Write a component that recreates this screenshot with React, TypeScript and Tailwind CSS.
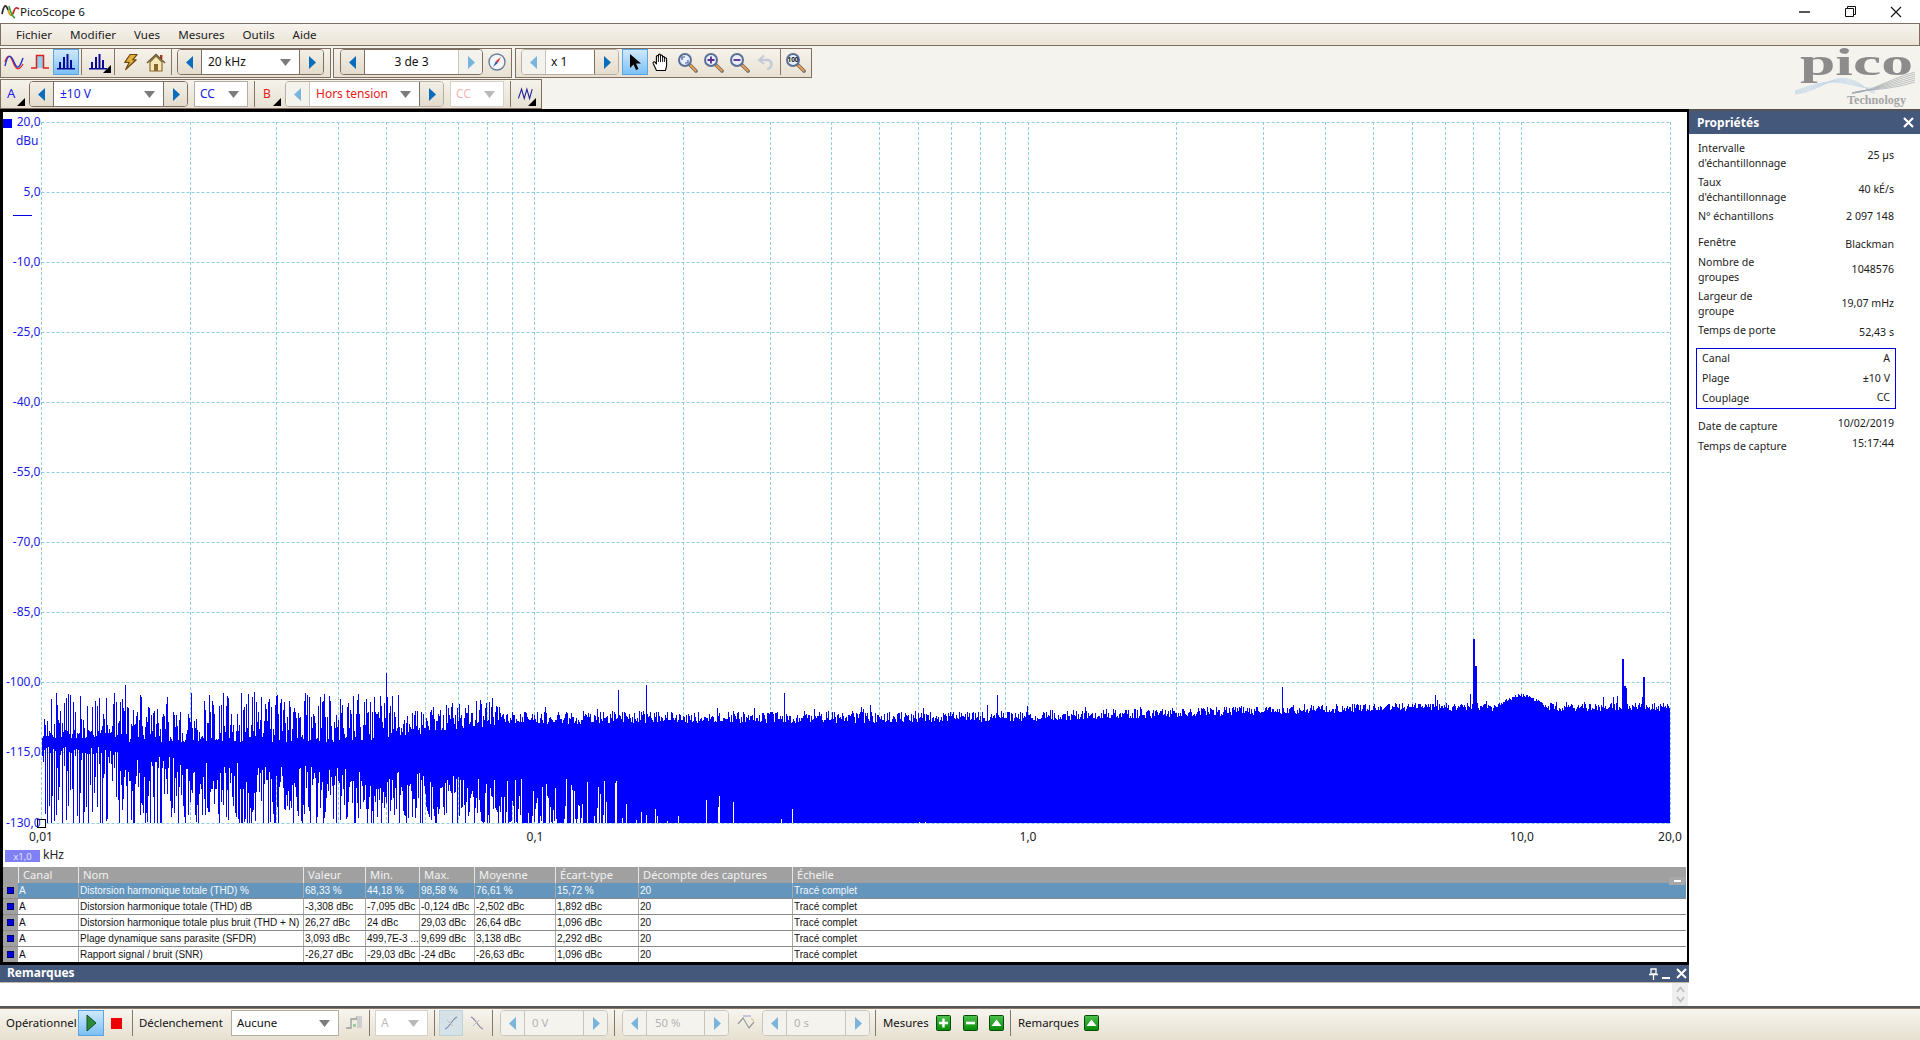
import { ReactNode } from 'react';

// seeded random so the trace stays the same on every load
const mulberry = (seed: number) => () => {
  seed = (seed + 0x6d2b79f5) | 0;
  let t = Math.imul(seed ^ (seed >>> 15), 1 | seed);
  t = (t + Math.imul(t ^ (t >>> 7), 61 | t)) ^ t;
  return ((t ^ (t >>> 14)) >>> 0) / 4294967296;
};

const lerp = (a: number, b: number, t: number) => a + (b - a) * Math.min(1, Math.max(0, t));

const buildTrace = () => {
  const rnd = mulberry(1234);
  const bottomEdge = 823;
  let d = '';
  for (let x = 42; x < 1670; x += x < 120 ? (rnd() < 0.55 ? 1 : 2) : 1) {
    // upper edge of the noise
    let top: number;
    if (x < 400) {
      top = 742 - Math.pow(rnd(), 1.25) * 50;
    } else if (x < 500) {
      top = lerp(736, 725, (x - 400) / 100) - Math.pow(rnd(), 1.5) * 28;
    } else {
      let base: number;
      if (x < 1000) base = lerp(725, 722, (x - 500) / 500);
      else if (x < 1400) base = lerp(722, 711, (x - 1000) / 400);
      else base = 711;
      top = base - rnd() * lerp(14, 8, (x - 500) / 900);
      if (rnd() < 0.05) top -= rnd() * 10;
      if (rnd() < 0.005) top -= 12 + rnd() * 14;
    }
    // hump around 10 kHz
    const hump = Math.max(0, 1 - Math.abs(x - 1521) / 26);
    if (hump > 0) top = 711 - Math.pow(hump, 0.6) * 14 - rnd() * 4;

    // lower edge: white slits coming up from the bottom
    let chance: number;
    let reach: number;
    if (x < 480) {
      chance = 0.96;
      reach = lerp(74, 46, (x - 42) / 438);
    } else if (x < 640) {
      chance = lerp(0.85, 0.15, (x - 480) / 160);
      reach = 44;
    } else if (x < 800) {
      chance = lerp(0.15, 0.03, (x - 640) / 160);
      reach = 28;
    } else if (x < 930) {
      chance = lerp(0.03, 0.004, (x - 800) / 130);
      reach = 18;
    } else {
      chance = 0.001;
      reach = 8;
    }
    let bottom = bottomEdge;
    if (rnd() < chance) {
      bottom = bottomEdge - Math.pow(rnd(), x < 480 ? 0.9 : 1.7) * reach;
      if (x < 480 && rnd() < 0.08) bottom = bottomEdge;
    }
    d += `M${x} ${top.toFixed(0)}V${bottom.toFixed(0)}`;
  }
  // keep the band solid at the very left, where the columns are spaced apart
  for (let x = 42; x < 120; x++) {
    const a = 738 - rnd() * 8;
    d += `M${x} ${a.toFixed(0)}V${(746 + rnd() * 8).toFixed(0)}`;
  }
  // the few peaks that stand out
  const peaks: [number, number][] = [
    [125, 685], [386, 673], [646, 685], [618, 690], [784, 693], [1473, 639], [1474, 639], [1475, 666],
    [1476, 666], [1470, 694], [1622, 659], [1623, 659], [1624, 686], [1625, 686], [1626, 688], [1643, 677],
    [1644, 677], [1617, 696], [1613, 697],
  ];
  peaks.forEach(([x, y]) => {
    d += `M${x} ${y}V720`;
  });
  return d;
};

const TRACE = buildTrace();

const px = (f: number) => 41.5 + 493.4 * Math.log10(f / 0.01);

const V_GRID: number[] = [];
[0.01, 0.1, 1, 10].forEach((dec) => {
  for (let m = 1; m < 10; m++) {
    if (dec * m <= 20) V_GRID.push(Math.floor(px(dec * m)) + 0.5);
  }
});
V_GRID.push(1670.5);

const Y_LABELS = ['20,0', '5,0', '-10,0', '-25,0', '-40,0', '-55,0', '-70,0', '-85,0', '-100,0', '-115,0', '-130,0'];

const Arrow = ({ dir, off }: { dir: 'l' | 'r'; off?: boolean }) => (
  <svg width="8" height="13" viewBox="0 0 8 13">
    <path d={dir === 'l' ? 'M7 0V13L0 6.5Z' : 'M1 0V13L8 6.5Z'} fill={off ? '#79b4dc' : '#0a6cbc'} />
  </svg>
);

const DropArrow = ({ off }: { off?: boolean }) => (
  <svg width="11" height="7" viewBox="0 0 11 7">
    <path d="M0 0H11L5.5 7Z" fill={off ? '#b9b9b9' : '#7c7c7c'} />
  </svg>
);

const Corner = () => (
  <svg width="8" height="8" viewBox="0 0 8 8">
    <path d="M8 0V8H0Z" fill="#000" />
  </svg>
);

const Sep = ({ className = '' }: { className?: string }) => <div className={`w-px h-[26px] bg-[#85766a] shrink-0 ${className}`} />;

const Slot = ({ className, children }: { className: string; children: ReactNode }) => (
  <div className={`h-[26px] shrink-0 flex items-center justify-center ${className}`}>{children}</div>
);

// spin box: arrow, text field, arrow
const Spinner = ({
  className,
  fieldClass,
  children,
  leftOff,
  rightOff,
  allOff,
}: {
  className: string;
  fieldClass: string;
  children: ReactNode;
  leftOff?: boolean;
  rightOff?: boolean;
  allOff?: boolean;
}) => (
  <div
    className={`h-[26px] shrink-0 flex rounded-[4px] border overflow-hidden ${
      allOff ? 'border-[#c9c5bc] bg-[#f5f3ee]' : leftOff ? 'border-[#b9aea2] bg-white' : 'border-[#7e6f62] bg-white'
    } ${className}`}
  >
    <div
      className={`w-[24px] shrink-0 flex items-center justify-center border-r ${
        allOff || leftOff
          ? 'bg-[#f4f2ed] border-[#c9c5bc]'
          : 'bg-gradient-to-b from-[#f3efe6] to-[#e4dccc] border-[#7e6f62]'
      }`}
    >
      <Arrow dir="l" off={allOff || leftOff} />
    </div>
    <div className={`flex-1 min-w-0 flex items-center ${fieldClass}`}>{children}</div>
    <div
      className={`w-[24px] shrink-0 flex items-center justify-center border-l ${
        allOff || rightOff
          ? 'bg-[#f4f2ed] border-[#c9c5bc]'
          : 'bg-gradient-to-b from-[#f3efe6] to-[#e4dccc] border-[#7e6f62]'
      }`}
    >
      <Arrow dir="r" off={allOff || rightOff} />
    </div>
  </div>
);

const Select = ({ className, label, textClass, off }: { className: string; label: string; textClass: string; off?: boolean }) => (
  <div
    className={`h-[26px] shrink-0 flex items-center justify-between pl-[5px] pr-[8px] border bg-white ${
      off ? 'border-[#d5d1c9]' : 'border-[#b5ada2]'
    } ${className}`}
  >
    <span className={textClass}>{label}</span>
    <DropArrow off={off} />
  </div>
);

const Lens = ({ children }: { children?: ReactNode }) => (
  <svg width="21" height="21" viewBox="0 0 21 21">
    <path d="M12.5 12.5L19 19" stroke="#6c6c6c" strokeWidth="3.6" strokeLinecap="round" />
    <path d="M13.5 13.5L18.6 18.6" stroke="#ee9f45" strokeWidth="2" strokeLinecap="round" />
    <circle cx="8" cy="8" r="6" fill="#e7f0fa" stroke="#5a6f96" strokeWidth="2" />
    {children}
  </svg>
);

const GreenBtn = ({ kind }: { kind: 'plus' | 'minus' | 'up' }) => (
  <svg width="15" height="16" viewBox="0 0 15 16">
    <defs>
      <linearGradient id="grn" x1="0" y1="0" x2="0" y2="1">
        <stop offset="0" stopColor="#4fc04f" />
        <stop offset="1" stopColor="#048a04" />
      </linearGradient>
    </defs>
    <rect x="0.5" y="0.5" width="14" height="15" rx="1" fill="url(#grn)" stroke="#064c06" />
    {kind === 'plus' && <path d="M3 8H12M7.5 3.5V12.5" stroke="#fff" strokeWidth="2.4" />}
    {kind === 'minus' && <path d="M3 8H12" stroke="#fff" strokeWidth="2.6" />}
    {kind === 'up' && <path d="M2.5 11H12.5L7.5 4.5Z" fill="#fff" />}
  </svg>
);

const ScopeIcon = () => (
  <svg width="20" height="16" viewBox="0 0 20 16" fill="none">
    <path d="M1 8C3 1 6 0 9 8S15 17 19 10" stroke="#e42a2a" strokeWidth="1.4" />
    <path d="M1 12C4 -2 7 1 10 8S15 16 19 4" stroke="#2733c8" strokeWidth="1.4" />
  </svg>
);

const SquareIcon = () => (
  <svg width="18" height="16" viewBox="0 0 18 16" fill="none">
    <rect x="6" y="2" width="7" height="12" fill="#8fd0ee" />
    <path d="M0 14H5.5V1.5H12.5V14H18" stroke="#e01f1f" strokeWidth="1.5" />
  </svg>
);

const BarsIcon = () => (
  <svg width="18" height="16" viewBox="0 0 18 16" fill="#0a0a9a">
    <rect x="0" y="14" width="18" height="1.5" />
    <rect x="2" y="8" width="2" height="6" />
    <rect x="6" y="3" width="2" height="11" />
    <rect x="9.5" y="0" width="2" height="14" />
    <rect x="13" y="6" width="2" height="8" />
  </svg>
);

const BoltIcon = () => (
  <svg width="15" height="18" viewBox="0 0 17 19">
    <path d="M8 1H16L11 7H15L3 18L7 10H2Z" fill="#e5b03c" stroke="#6d4a12" strokeWidth="1.4" strokeLinejoin="round" />
  </svg>
);

const HomeIcon = () => (
  <svg width="20" height="19" viewBox="0 0 20 19">
    <path d="M4 9V18H16V9L10 3Z" fill="#f6e9b8" stroke="#8a6a2a" strokeWidth="1.2" />
    <rect x="8" y="11" width="4" height="7" fill="#8a6a2a" />
    <path d="M1 10L10 1.5L19 10" fill="none" stroke="#6a5a3a" strokeWidth="1.6" />
    <rect x="14" y="2" width="2.4" height="4" fill="#9a3a22" />
  </svg>
);

const CompassIcon = () => (
  <svg width="18" height="18" viewBox="0 0 18 18">
    <circle cx="9" cy="9" r="8" fill="#f4f6fa" stroke="#6a7f9f" strokeWidth="1.4" />
    <path d="M13 4L9.8 10L8 8Z" fill="#e0352a" />
    <path d="M5 14L8 8L9.8 10Z" fill="#2a58b8" />
  </svg>
);

const AwIcon = () => (
  <svg width="16" height="14" viewBox="0 0 18 14" fill="none">
    <path d="M0.5 12L4 1.5L7 12L10 1.5L13 12L16 1.5" stroke="#1f1f9a" strokeWidth="1.2" />
  </svg>
);

const ToolBox = ({ className, children }: { className: string; children: ReactNode }) => (
  <div
    className={`h-[30px] shrink-0 flex items-center border border-[#7e6f62] bg-gradient-to-b from-[#f6f3ec] to-[#e8e1d2] ${className}`}
  >
    {children}
  </div>
);

const Toolbars = () => (
  <div className="flex flex-col gap-px pt-[2px]">
    <div className="flex">
      <ToolBox className="w-[331px] pb-[2px]">
        <Slot className="w-[26px]">
          <ScopeIcon />
        </Slot>
        <Slot className="w-[26px]">
          <SquareIcon />
        </Slot>
        <Slot className="w-[26px] border border-[#5aa7e8] bg-gradient-to-b from-[#cfe8fb] to-[#7cc0f5]">
          <BarsIcon />
        </Slot>
        <Sep className="ml-[2px]" />
        <Slot className="w-[32px]">
          <div className="relative">
            <BarsIcon />
            <div className="absolute right-[-4px] bottom-[-3px] flex">
              <Corner />
            </div>
          </div>
        </Slot>
        <Sep />
        <Slot className="w-[30px]">
          <BoltIcon />
        </Slot>
        <Slot className="w-[22px]">
          <HomeIcon />
        </Slot>
        <Sep className="ml-[4px]" />
        <Spinner className="ml-[5px] w-[147px]" fieldClass="pl-[6px] justify-between pr-[8px]">
          <span className="text-[12px] text-[#111]">20 kHz</span>
          <DropArrow />
        </Spinner>
      </ToolBox>
      <ToolBox className="ml-[2px] w-[179px] pb-[2px]">
        <Spinner className="ml-[6px] w-[143px]" fieldClass="justify-center" rightOff>
          <span className="text-[12px] text-[#111]">3 de 3</span>
        </Spinner>
        <Slot className="w-[28px]">
          <CompassIcon />
        </Slot>
      </ToolBox>
      <ToolBox className="ml-[3px] w-[297px] pb-[2px]">
        <Spinner className="ml-[5px] w-[98px]" fieldClass="pl-[5px]" leftOff>
          <span className="text-[12px] text-[#111]">x 1</span>
        </Spinner>
        <Slot className="ml-[3px] w-[26px] border border-[#5aa7e8] bg-gradient-to-b from-[#cfe8fb] to-[#7cc0f5]">
          <svg width="14" height="18" viewBox="0 0 14 18">
            <path d="M2 1V15L5.5 11.5L8 17L10.5 16L8 10.5H13Z" fill="#000" />
          </svg>
        </Slot>
        <Slot className="w-[26px]">
          <svg width="18" height="19" viewBox="0 0 18 19">
            <path
              d="M4.5 17.5L1.2 10.5C.6 9 2.3 8.2 3.2 9.4L4.4 11V3.6C4.4 2.2 6.4 2.2 6.4 3.6V2.2C6.4 .8 8.5 .8 8.5 2.2V3C8.5 1.7 10.6 1.7 10.6 3V4.4C10.6 3.2 12.6 3.2 12.6 4.6V5.5C12.6 4.4 14.6 4.4 14.6 5.7V12C14.6 14 14 15.5 13.4 17.5Z"
              fill="#fff"
              stroke="#000"
              strokeWidth="1.1"
              strokeLinejoin="round"
            />
            <path d="M6.4 3.6V9M8.5 3V9M10.6 4.4V9M12.6 5.5V9" stroke="#000" strokeWidth="0.9" />
          </svg>
        </Slot>
        <Slot className="w-[26px]">
          <Lens>
            <path d="M5 8V5H8M11 8V11H8" fill="none" stroke="#4a5f90" strokeWidth="1.2" />
          </Lens>
        </Slot>
        <Slot className="w-[26px]">
          <Lens>
            <path d="M4.5 8H11.5M8 4.5V11.5" stroke="#5a2a8a" strokeWidth="1.8" />
          </Lens>
        </Slot>
        <Slot className="w-[26px]">
          <Lens>
            <path d="M4.5 8H11.5" stroke="#5a2a8a" strokeWidth="1.8" />
          </Lens>
        </Slot>
        <Slot className="w-[26px]">
          <svg width="17" height="17" viewBox="0 0 17 17" fill="none">
            <path d="M7 1.5L2 6L7 10" stroke="#c4cbd8" strokeWidth="2" />
            <path d="M3 6H10C15 6 16.5 13 10 15.5" stroke="#c4cbd8" strokeWidth="2.4" />
          </svg>
        </Slot>
        <Sep className="ml-[2px]" />
        <Slot className="w-[29px]">
          <Lens>
            <text x="8" y="10" fontSize="6.5" fontWeight="700" textAnchor="middle" fill="#222">
              100
            </text>
          </Lens>
        </Slot>
      </ToolBox>
    </div>
    <ToolBox className="w-[542px]">
      <div className="w-[28px] h-[26px] shrink-0 relative flex items-center pl-[6px]">
        <span className="text-[13px] text-[#2222ee]">A</span>
        <div className="absolute left-[16px] bottom-[1px] flex">
          <Corner />
        </div>
      </div>
      <Spinner className="w-[159px]" fieldClass="pl-[6px] pr-[8px] justify-between">
        <span className="text-[12px] text-[#1a1ae0]">±10 V</span>
        <DropArrow />
      </Spinner>
      <Select className="ml-[6px] w-[54px]" label="CC" textClass="text-[12px] text-[#1a1ae0]" />
      <Sep className="ml-[6px]" />
      <div className="w-[30px] h-[26px] shrink-0 relative flex items-center pl-[8px]">
        <span className="text-[12px] text-[#e81a1a]">B</span>
        <div className="absolute left-[18px] bottom-[1px] flex">
          <Corner />
        </div>
      </div>
      <Spinner className="w-[159px]" fieldClass="pl-[6px] pr-[8px] justify-between" leftOff>
        <span className="text-[12px] text-[#e81a1a]">Hors tension</span>
        <DropArrow />
      </Spinner>
      <Select className="ml-[6px] w-[54px]" label="CC" textClass="text-[12px] text-[#f5b5b5]" off />
      <Sep className="ml-[6px]" />
      <div className="w-[30px] h-[26px] shrink-0 relative flex items-center pl-[7px]">
        <AwIcon />
        <div className="absolute left-[17px] bottom-[1px] flex">
          <Corner />
        </div>
      </div>
    </ToolBox>
  </div>
);

const PicoLogo = () => (
  <svg width="130" height="68" viewBox="0 -5 130 68" className="shrink-0 mt-[-5px]">
    {[0, 1, 2, 3, 4, 5].map((i) => (
      <g key={i} fill="none" strokeWidth="0.7">
        <path d={`M5 ${48 - i * 0.6}C30 ${46 - i * 2} 40 ${29 + i} 58 ${33 + i}S75 ${47 - i} 85 ${47 - i}`} stroke="#c3d7e8" />
        <path d={`M62 ${47 + 0}C78 ${47 - i} 92 ${36 + i * 2} 125 ${26 + i * 2}`} stroke="#a4a9ae" />
      </g>
    ))}
    <text
      x="10"
      y="29"
      fontFamily="Liberation Serif, serif"
      fontSize="38"
      fontWeight="700"
      fill="#8c8c8c"
      textLength="113"
      lengthAdjust="spacingAndGlyphs"
    >
      pico
    </text>
    <text x="57" y="58" fontFamily="Liberation Serif, serif" fontSize="11.5" fontWeight="700" fill="#a5a5a5" textLength="59" lengthAdjust="spacingAndGlyphs">
      Technology
    </text>
  </svg>
);

const Chart = () => (
  <svg width="1684" height="755" viewBox="3 112 1684 755" className="block shrink-0">
    <g stroke="#8fcfe0" strokeWidth="1" strokeDasharray="3 2">
      {Y_LABELS.map((_, i) => (
        <line key={i} x1="41.5" x2="1670" y1={Math.floor(122 + i * 70.1) + 0.5} y2={Math.floor(122 + i * 70.1) + 0.5} />
      ))}
      {V_GRID.map((x, i) => (
        <line key={i} x1={x} x2={x} y1="122" y2="823" />
      ))}
    </g>
    <path d={TRACE} stroke="#0000ff" strokeWidth="1" shapeRendering="crispEdges" fill="none" />
    <rect x="37.5" y="819.5" width="8" height="8" fill="#fff" stroke="#000" />
    <g fill="#1a1ae8" fontSize="12">
      {Y_LABELS.map((l, i) => (
        <text key={l} x="40.5" y={125.5 + i * 70.1} textAnchor="end">
          {l}
        </text>
      ))}
      <text x="38.5" y="145" textAnchor="end">
        dBu
      </text>
    </g>
    <rect x="3" y="119" width="9" height="9" fill="#0000ff" />
    <line x1="13" x2="32" y1="215.5" y2="215.5" stroke="#0000e0" />
    <g fill="#222" fontSize="12" textAnchor="middle">
      <text x="41" y="841">0,01</text>
      <text x="535" y="841">0,1</text>
      <text x="1028" y="841">1,0</text>
      <text x="1522" y="841">10,0</text>
      <text x="1670" y="841">20,0</text>
    </g>
    <rect x="5" y="850" width="35" height="12" fill="#8080f4" />
    <text x="22.5" y="859.5" fontSize="9.5" fill="#e4e4ff" textAnchor="middle">
      x1,0
    </text>
    <text x="43" y="859" fontSize="12" fill="#222">
      kHz
    </text>
  </svg>
);

const COLS = 'grid grid-cols-[15px_60px_225px_62px_54px_55px_81px_83px_154px_1fr]';

const ROWS = [
  ['Distorsion harmonique totale (THD) %', '68,33 %', '44,18 %', '98,58 %', '76,61 %', '15,72 %'],
  ['Distorsion harmonique totale (THD) dB', '-3,308 dBc', '-7,095 dBc', '-0,124 dBc', '-2,502 dBc', '1,892 dBc'],
  ['Distorsion harmonique totale plus bruit (THD + N)', '26,27 dBc', '24 dBc', '29,03 dBc', '26,64 dBc', '1,096 dBc'],
  ['Plage dynamique sans parasite (SFDR)', '3,093 dBc', '499,7E-3 ...', '9,699 dBc', '3,138 dBc', '2,292 dBc'],
  ['Rapport signal / bruit (SNR)', '-26,27 dBc', '-29,03 dBc', '-24 dBc', '-26,63 dBc', '1,096 dBc'],
];

const HEADERS = ['Canal', 'Nom', 'Valeur', 'Min.', 'Max.', 'Moyenne', 'Écart-type', 'Décompte des captures', 'Échelle'];

const MeasureTable = () => (
  <div className="h-[95px] shrink-0 flex flex-col border-r border-white">
    <div className={`${COLS} h-[16px] shrink-0 bg-[#a0a0a0] text-[#f2f2f2] text-[11.2px] leading-[16px] relative`}>
      <div />
      {HEADERS.map((h) => (
        <div key={h} className="pl-[4px] border-l border-[#e6e6e6] whitespace-nowrap overflow-hidden">
          {h}
        </div>
      ))}
      <div className="absolute right-[1px] bottom-[-2px] w-[16px] h-[8px] bg-[#a8a8a8] flex items-center justify-center">
        <div className="w-[7px] h-[2px] bg-white" />
      </div>
    </div>
    {ROWS.map((r, i) => (
      <div
        key={r[0]}
        className={`${COLS} h-[16px] shrink-0 font-['Liberation_Sans',sans-serif] text-[10px] leading-[15px] border-b border-[#8a8a8a] ${
          i === 0 ? 'bg-[#6496bd] text-[#f4f8fb]' : 'bg-white text-[#111]'
        }`}
      >
        <div className="bg-[#a0a0a0] flex items-center justify-center">
          <div className="w-[7px] h-[7px] bg-[#0000e8] border border-[#000060]" />
        </div>
        <div className="pl-[1px]">A</div>
        {r.map((c) => (
          <div key={c} className="pl-[1px] border-l border-[#a9a9a9] whitespace-nowrap overflow-hidden">
            {c}
          </div>
        ))}
        <div className="pl-[1px] border-l border-[#a9a9a9]">20</div>
        <div className="pl-[1px] border-l border-[#a9a9a9]">Tracé complet</div>
      </div>
    ))}
  </div>
);

const Remarks = () => (
  <div className="flex flex-col shrink-0">
    <div className="h-[17px] bg-[#43587b] flex items-center justify-between pl-[7px] pr-[2px]">
      <span className="text-[12px] font-bold text-white mb-[2px]">Remarques</span>
      <div className="flex items-center gap-[4px]">
        <svg width="9" height="12" viewBox="0 0 9 12" fill="none">
          <path d="M2 1H7V6H2ZM0 6.5H9M4.5 7V12" stroke="#fff" strokeWidth="1.3" />
        </svg>
        <div className="w-[8px] h-[2px] bg-white mt-[8px]" />
        <svg width="11" height="11" viewBox="0 0 11 11" className="ml-[2px]">
          <path d="M1 1L10 10M10 1L1 10" stroke="#fff" strokeWidth="2" />
        </svg>
      </div>
    </div>
    <div className="h-[24px] bg-white border-t border-[#c4b8a8] flex justify-end pr-[1px]">
      <div className="w-[16px] bg-[#efefef] flex flex-col items-center justify-between py-[3px]">
        <svg width="9" height="7" viewBox="0 0 9 7" fill="none">
          <path d="M1 6L4.5 1.5L8 6" stroke="#bdbdbd" strokeWidth="1.6" />
        </svg>
        <svg width="9" height="7" viewBox="0 0 9 7" fill="none">
          <path d="M1 1L4.5 5.5L8 1" stroke="#bdbdbd" strokeWidth="1.6" />
        </svg>
      </div>
    </div>
  </div>
);

const PropRow = ({ label, value, className, valueClass = '' }: { label: ReactNode; value: string; className: string; valueClass?: string }) => (
  <div className={`flex items-center justify-between ${className}`}>
    <div className="leading-[15px]">{label}</div>
    <div className={`whitespace-nowrap ${valueClass}`}>{value}</div>
  </div>
);

const Properties = () => (
  <div className="w-[231px] shrink-0 flex flex-col bg-white border-t-2 border-[#555]">
    <div className="h-[23px] shrink-0 bg-[#43587b] flex items-center justify-between pl-[8px] pr-[6px]">
      <span className="text-[12px] font-bold text-white">Propriétés</span>
      <svg width="11" height="11" viewBox="0 0 11 11">
        <path d="M1 1L10 10M10 1L1 10" stroke="#fff" strokeWidth="2.2" />
      </svg>
    </div>
    <div className="flex-1 flex flex-col pt-[6px] pl-[9px] pr-[26px] text-[10.6px] text-[#1c1c1c]">
      <PropRow className="h-[31px]" label={<>Intervalle<br />d'échantillonnage</>} value="25 µs" />
      <PropRow className="h-[31px] mt-[3px]" label={<>Taux<br />d'échantillonnage</>} value="40 kÉ/s" />
      <PropRow className="h-[17px] mt-[3px]" label="N° échantillons" value="2 097 148" />
      <PropRow className="h-[17px] mt-[9px]" label="Fenêtre" value="Blackman" valueClass="mt-[4px]" />
      <PropRow className="h-[31px] mt-[3px]" label={<>Nombre de<br />groupes</>} value="1048576" />
      <PropRow className="h-[31px] mt-[3px]" label={<>Largeur de<br />groupe</>} value="19,07 mHz" />
      <PropRow className="h-[17px] mt-[3px]" label="Temps de porte" value="52,43 s" valueClass="mt-[4px]" />
      <div className="mt-[9px] ml-[-2px] mr-[-2px] h-[61px] border border-[#0000e0] flex flex-col justify-center px-[5px]">
        <PropRow className="h-[20px]" label="Canal" value="A" />
        <PropRow className="h-[20px]" label="Plage" value="±10 V" />
        <PropRow className="h-[20px]" label="Couplage" value="CC" />
      </div>
      <PropRow className="h-[20px] mt-[7px]" label="Date de capture" value="10/02/2019" valueClass="mb-[4px]" />
      <PropRow className="h-[20px]" label="Temps de capture" value="15:17:44" valueClass="mb-[4px]" />
    </div>
    <div className="h-[2px] shrink-0 bg-[#555]" />
  </div>
);

const BottomBar = () => (
  <div className="h-[32px] shrink-0 flex items-center pb-[3px] border-t border-[#8a7b6c] bg-gradient-to-b from-[#f7f5ef] to-[#e7e0d0] text-[11.4px] text-[#111]">
    <span className="pl-[6px] w-[78px] shrink-0 whitespace-nowrap">Opérationnel</span>
    <Slot className="w-[26px] border border-[#5aa7e8] bg-gradient-to-b from-[#cfe8fb] to-[#7cc0f5]">
      <svg width="11" height="18" viewBox="0 0 11 18">
        <path d="M1 1V17L10 9Z" fill="#2b8a3a" stroke="#14521f" />
      </svg>
    </Slot>
    <Slot className="w-[24px]">
      <div className="w-[11px] h-[11px] bg-[#ee0000]" />
    </Slot>
    <Sep className="ml-[4px]" />
    <span className="ml-[6px] w-[92px] shrink-0 whitespace-nowrap">Déclenchement</span>
    <Select className="w-[108px]" label="Aucune" textClass="text-[11.4px] text-[#111]" />
    <Slot className="w-[30px]">
      <svg width="18" height="18" viewBox="0 0 18 18" fill="none">
        <path d="M1 14H6V5H12V2" stroke="#9a9a9a" strokeWidth="1.3" />
        <rect x="12" y="2" width="5" height="12" fill="#cfcfcf" />
        <rect x="8" y="10" width="3" height="3" fill="#9fcf9f" />
      </svg>
    </Slot>
    <Sep />
    <Select className="ml-[5px] w-[53px]" label="A" textClass="text-[12px] text-[#bdbdbd]" off />
    <Sep className="ml-[6px]" />
    <Slot className="ml-[4px] w-[24px] bg-[#d5e2e8] border border-[#c2d2da]">
      <svg width="14" height="14" viewBox="0 0 14 14" fill="none">
        <path d="M1 13C6 11 8 3 13 1" stroke="#8a8aa8" strokeWidth="1.2" />
        <path d="M3 4L9 10" stroke="#bcbcbc" />
      </svg>
    </Slot>
    <Slot className="w-[27px]">
      <svg width="14" height="14" viewBox="0 0 14 14" fill="none">
        <path d="M1 1C6 3 8 11 13 13" stroke="#8a8aa8" strokeWidth="1.2" />
        <path d="M3 10L9 4" stroke="#bcbcbc" />
      </svg>
    </Slot>
    <Sep className="ml-[2px]" />
    <Spinner className="ml-[7px] w-[108px]" fieldClass="pl-[7px]" allOff>
      <span className="text-[#b3b3b3]">0 V</span>
    </Spinner>
    <Sep className="ml-[6px]" />
    <Spinner className="ml-[7px] w-[107px]" fieldClass="pl-[8px]" allOff>
      <span className="text-[#b3b3b3]">50 %</span>
    </Spinner>
    <Slot className="w-[33px]">
      <svg width="18" height="16" viewBox="0 0 18 16" fill="none">
        <path d="M1 9L6 3L12 13L17 7" stroke="#9a9a9a" strokeWidth="1.2" />
        <path d="M6 1H14" stroke="#a9a9dc" strokeWidth="1.2" />
        <path d="M14 3L17 6" stroke="#d9d39c" strokeWidth="1.6" />
      </svg>
    </Slot>
    <Spinner className="w-[108px]" fieldClass="pl-[7px]" allOff>
      <span className="text-[#b3b3b3]">0 s</span>
    </Spinner>
    <Sep className="ml-[5px]" />
    <span className="ml-[7px] w-[50px] shrink-0">Mesures</span>
    <Slot className="w-[20px]">
      <GreenBtn kind="plus" />
    </Slot>
    <Slot className="ml-[7px] w-[20px]">
      <GreenBtn kind="minus" />
    </Slot>
    <Slot className="ml-[6px] w-[20px]">
      <GreenBtn kind="up" />
    </Slot>
    <Sep className="ml-[4px]" />
    <span className="ml-[7px] w-[63px] shrink-0">Remarques</span>
    <Slot className="w-[20px]">
      <GreenBtn kind="up" />
    </Slot>
  </div>
);

export default function App() {
  return (
    <div className="w-[1920px] h-[1040px] overflow-hidden flex flex-col bg-[#f5f3ee] font-['Noto_Sans',sans-serif] text-[#111]">
      {/* Title bar */}
      <div className="h-[23px] shrink-0 bg-white flex items-center justify-between">
        <div className="flex items-center">
          <svg width="19" height="16" viewBox="0 0 19 16" fill="none" className="ml-px">
            <path d="M1 11C3 1 5 1 7 7" stroke="#2a2a2a" strokeWidth="1.8" />
            <path d="M7 7C9 14 11 14 13 7" stroke="#e0a020" strokeWidth="1.8" />
            <path d="M8 3C10 12 12 14 14 15" stroke="#2fa03a" strokeWidth="1.6" />
            <path d="M12 11C14 4 15 4 18 6" stroke="#c02a2a" strokeWidth="1.6" />
          </svg>
          <span className="text-[11.6px] text-[#111]">PicoScope 6</span>
        </div>
        <div className="flex items-center">
          <div className="w-[46px] flex justify-center">
            <div className="w-[11px] h-[2px] bg-[#555]" />
          </div>
          <div className="w-[46px] flex justify-center">
            <svg width="11" height="11" viewBox="0 0 11 11" fill="none" stroke="#111">
              <path d="M.5 2.5H8.5V10.5H.5ZM2.5 2.5V.5H10.5V8.5H8.5" />
            </svg>
          </div>
          <div className="w-[46px] flex justify-center mr-[1px]">
            <svg width="12" height="12" viewBox="0 0 12 12" fill="none" stroke="#111" strokeWidth="1.1">
              <path d="M1 1L11 11M11 1L1 11" />
            </svg>
          </div>
        </div>
      </div>

      {/* Menu */}
      <div className="h-[23px] shrink-0 flex items-center border border-[#7e6f62] bg-gradient-to-b from-[#f7f4ee] to-[#ebe4d6] text-[11.6px] text-[#222] pl-[15px] gap-[18px]">
        <span>Fichier</span>
        <span>Modifier</span>
        <span>Vues</span>
        <span>Mesures</span>
        <span>Outils</span>
        <span>Aide</span>
      </div>

      {/* Toolbars and logo */}
      <div className="h-[63px] shrink-0 flex justify-between">
        <Toolbars />
        <PicoLogo />
      </div>

      {/* Main area */}
      <div className="flex-1 min-h-0 flex">
        <div className="w-[1689px] shrink-0 flex flex-col">
          <div className="border-x-[3px] border-t-[3px] border-black border-r-2 bg-white flex flex-col">
            <Chart />
            <MeasureTable />
          </div>
          <div className="h-[3px] shrink-0 bg-black" />
          <Remarks />
          <div className="h-[2px] shrink-0 bg-[#555]" />
        </div>
        <Properties />
      </div>

      <BottomBar />
    </div>
  );
}
